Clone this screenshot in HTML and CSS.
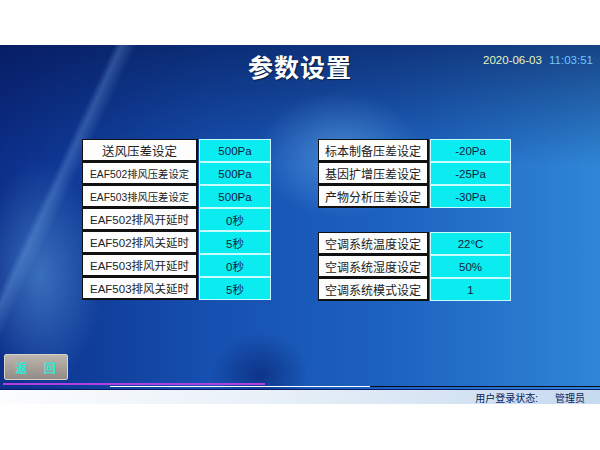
FILE: index.html
```html
<!DOCTYPE html>
<html lang="zh-CN">
<head>
  <meta charset="UTF-8">
  <title>参数设置</title>
  <link rel="stylesheet" href="styles.css">
</head>
<body>
  <div class="screen">
    <header class="top">
      <span></span>
      <h1>参数设置</h1>
      <div class="clock">
        <span class="date">2020-06-03</span>
        <span class="time">11:03:51</span>
      </div>
    </header>

    <section class="params">
      <div class="table left">
        <div class="row"><div class="label big">送风压差设定</div><div class="value">500Pa</div></div>
        <div class="row"><div class="label small">EAF502排风压差设定</div><div class="value">500Pa</div></div>
        <div class="row"><div class="label small">EAF503排风压差设定</div><div class="value">500Pa</div></div>
        <div class="row"><div class="label">EAF502排风开延时</div><div class="value">0秒</div></div>
        <div class="row"><div class="label">EAF502排风关延时</div><div class="value">5秒</div></div>
        <div class="row"><div class="label">EAF503排风开延时</div><div class="value">0秒</div></div>
        <div class="row"><div class="label">EAF503排风关延时</div><div class="value">5秒</div></div>
      </div>

      <div class="col-right">
        <div class="table right">
          <div class="row"><div class="label">标本制备压差设定</div><div class="value">-20Pa</div></div>
          <div class="row"><div class="label">基因扩增压差设定</div><div class="value">-25Pa</div></div>
          <div class="row"><div class="label">产物分析压差设定</div><div class="value">-30Pa</div></div>
        </div>
        <div class="table right">
          <div class="row"><div class="label">空调系统温度设定</div><div class="value">22°C</div></div>
          <div class="row"><div class="label">空调系统湿度设定</div><div class="value">50%</div></div>
          <div class="row"><div class="label">空调系统模式设定</div><div class="value">1</div></div>
        </div>
      </div>
    </section>

    <button class="back">返 回</button>
    <div class="rule"></div>
  </div>

  <footer class="status">
    <span>用户登录状态:</span>
    <span>管理员</span>
  </footer>
</body>
</html>
```

FILE: styles.css
```css
* { margin: 0; padding: 0; box-sizing: border-box; }

body {
  width: 600px;
  height: 450px;
  background: #fff;
  font-family: "Liberation Sans", "Noto Sans CJK SC", sans-serif;
  padding-top: 45px;
}

/* main HMI screen */
.screen {
  height: 345px;
  display: flex;
  flex-direction: column;
  background:
    radial-gradient(ellipse 90px 160px at 40px 230px, rgba(110, 180, 240, 0.45), transparent 70%),
    radial-gradient(ellipse 120px 90px at 340px 110px, rgba(120, 190, 245, 0.45), transparent 70%),
    radial-gradient(ellipse 70px 60px at 260px 330px, rgba(5, 25, 100, 0.55), transparent 70%),
    linear-gradient(115deg, transparent 0, transparent 15%, rgba(150, 200, 255, 0.25) 16%, transparent 18%),
    linear-gradient(to bottom, rgba(3, 15, 70, 0.55) 0, rgba(3, 15, 70, 0) 35%),
    linear-gradient(to right, #0c2f8a 0%, #1650b0 35%, #1d62c0 65%, #2f86d6 100%);
}

.top {
  height: 40px;
  display: grid;
  grid-template-columns: 1fr auto 1fr;
  align-items: center;
}

.top h1 {
  color: #fff;
  font-family: "Noto Sans CJK SC", sans-serif;
  font-size: 25px;
  font-weight: 700;
  letter-spacing: 1px;
  text-shadow: 1px 1px 1px rgba(0, 0, 0, 0.5);
  margin-top: 1px;
}

.clock {
  justify-self: end;
  padding-right: 7px;
  font-size: 11.5px;
  margin-top: -10px;
}

.clock .date { color: #e8f4b8; margin-right: 4px; }
.clock .time { color: #6ec8ff; }

.params {
  display: flex;
  gap: 47px;
  padding: 54px 0 0 82px;
}

.col-right {
  display: flex;
  flex-direction: column;
  gap: 24px;
}

.table { display: flex; flex-direction: column; }

.row {
  display: flex;
  height: 23px;
}

.label {
  width: 116px;
  background: #fdfdfd;
  border: 1px solid #111;
  border-bottom-width: 2px;
  border-right-width: 2px;
  display: flex;
  align-items: center;
  justify-content: center;
  font-size: 11.5px;
  color: #222;
}

.label.big { font-size: 12.5px; }
.label.small { font-size: 10.3px; }

.value {
  width: 72px;
  margin-left: 1px;
  background: #0aecf0;
  border: 1px solid #c8fcff;
  display: flex;
  align-items: center;
  justify-content: center;
  font-size: 11.5px;
  color: #102040;
}

.right .label { width: 111px; font-size: 12px; }
.right .value { width: 81px; }

.back {
  margin: auto 0 0 4px;
  width: 64px;
  height: 26px;
  background: linear-gradient(to bottom, #bdb6ae, #938c86);
  border: 1px solid #d8d2cc;
  border-radius: 2px;
  color: #30e8d8;
  font-family: "Noto Sans CJK SC", sans-serif;
  font-size: 12px;
  font-weight: 700;
  letter-spacing: 7px;
  padding-left: 6px;
}

/* bottom decorative lines */
.rule {
  height: 8px;
  margin-top: 2px;
  background:
    linear-gradient(#b040e0, #b040e0) 3px 1px / 262px 2px no-repeat,
    linear-gradient(#fff, #fff) 110px 4px / 260px 1px no-repeat,
    linear-gradient(#0a0a20, #0a0a20) 265px 4px / 335px 1px no-repeat,
    linear-gradient(#0a1a70, #0a1a70) 0 7px / 600px 1px no-repeat;
}

.status {
  height: 14px;
  display: flex;
  justify-content: flex-end;
  align-items: center;
  gap: 17px;
  padding-right: 15px;
  background: linear-gradient(to right, #fbfcfe 0%, #e8f0f8 45%, #c6daef 100%);
  font-size: 10px;
  color: #0a1a5a;
}
```
